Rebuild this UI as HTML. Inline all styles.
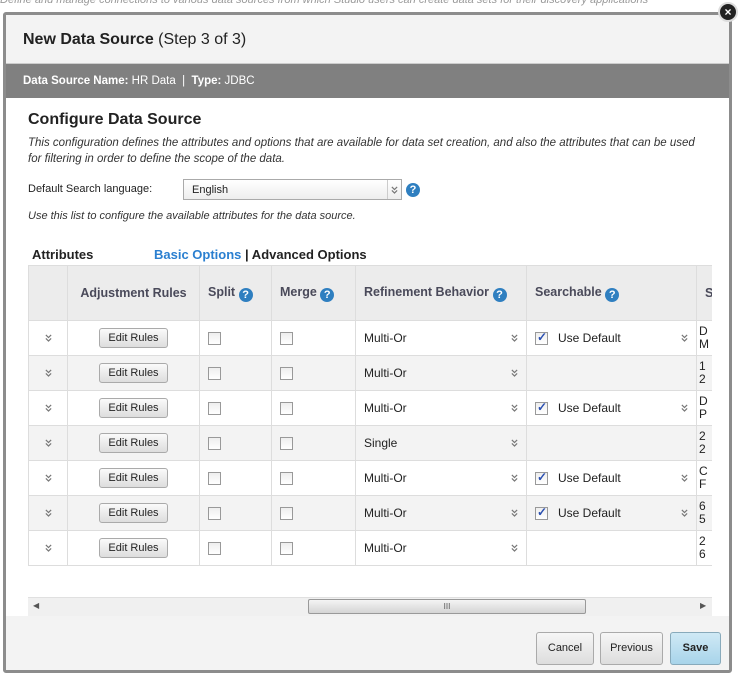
<!DOCTYPE html>
<html><head><meta charset="utf-8"><style>
*{margin:0;padding:0;box-sizing:border-box}
body{width:741px;height:675px;background:#fff;font-family:"Liberation Sans",Arial,sans-serif;position:relative;overflow:hidden;font-size:12px;color:#222}
.a{position:absolute}
.bgtext{left:0;top:-6px;font-size:11px;color:#999;white-space:nowrap;font-style:italic}
.dlg{left:3px;top:12px;width:729px;height:661px;border:3px solid #8c8c8c;border-radius:3px;background:#fff;overflow:hidden}
.hdr{left:0;top:0;width:100%;height:49px;background:#f3f3f3;border-bottom:1px solid #ccc}
.hdr span{position:absolute;left:17px;top:16px;font-size:16px;color:#222}
.bar{left:0;top:49px;width:100%;height:34px;background:#808080;color:#fff;font-size:11.5px;padding:11px 0 0 17px}
h2{position:absolute;left:22px;top:96px;font-size:16px;font-weight:bold;color:#222}
.it{font-style:italic;font-size:11.5px;color:#333;line-height:16px}
.sel{left:177px;top:164px;width:219px;height:21px;border:1px solid #aaa;background:linear-gradient(#fff,#eee);padding:4px 8px;font-size:11px}
.q{display:inline-block;width:14px;height:14px;border-radius:50%;background:#2f7fc0;color:#fff;font-size:11px;font-weight:bold;text-align:center;line-height:14px;vertical-align:-2px}
table{border-collapse:collapse;position:absolute;left:22px;top:250px;table-layout:fixed}
td,th{border:1px solid #ddd;height:35px;font-size:12px;padding:0 8px;white-space:nowrap;overflow:hidden;vertical-align:middle}
th{height:55px;background:#ececec;color:#4a4a5a;font-size:12.5px;text-align:left}
tr.g td{background:#f3f3f3}
.btn{display:inline-block;border:1px solid #aaa;border-radius:3px;background:linear-gradient(#fafafa,#ddd);padding:3px 8px;font-size:11px;color:#222}
.cb{display:inline-block;width:13px;height:13px;border:1px solid #999;background:linear-gradient(#eee,#fff);vertical-align:middle;position:relative}
.cb.c::after{content:"✓";position:absolute;left:1px;top:-3px;color:#2a4fb0;font-size:12px;font-weight:bold}
.dd{display:flex;align-items:center;justify-content:space-between}
.fbtn{top:617px;height:33px;border:1px solid #aaa;border-radius:3px;background:linear-gradient(#f6f6f6,#ddd);font-size:11px;text-align:center;line-height:31px;color:#222}
</style></head><body>
<svg width="0" height="0" style="position:absolute"><defs><symbol id="ch" viewBox="0 0 8 9"><path d="M1 1L4 4L7 1M1 5L4 8L7 5" fill="none" stroke="#777" stroke-width="1.4"/></symbol></defs></svg>
<div class="a bgtext">Define and manage connections to various data sources from which Studio users can create data sets for their discovery applications</div>
<div class="a dlg">
 <div class="a hdr"><span><b>New Data Source</b> (Step 3 of 3)</span></div>
 <div class="a bar"><b>Data Source Name:</b> HR Data &nbsp;|&nbsp; <b>Type:</b> JDBC</div>
 <h2>Configure Data Source</h2>
 <div class="a it" style="left:22px;top:120px;width:678px">This configuration defines the attributes and options that are available for data set creation, and also the attributes that can be used for filtering in order to define the scope of the data.</div>
 <div class="a" style="left:22px;top:168px;font-size:11px">Default Search language:</div>
 <div class="a sel">English<span style="position:absolute;right:0;top:0;width:14px;height:19px;border-left:1px solid #ccc;text-align:center;padding-top:5px"><svg width="7" height="8"><use href="#ch"/></svg></span></div>
 <div class="a" style="left:400px;top:165px"><span class="q">?</span></div>
 <div class="a it" style="left:22px;top:193px;font-size:11px">Use this list to configure the available attributes for the data source.</div>
 <div class="a" style="left:26px;top:232px;font-size:13px;font-weight:bold">Attributes</div>
 <div class="a" style="left:148px;top:232px;font-size:13px;font-weight:bold"><span style="color:#2a7fd0">Basic Options</span> | Advanced Options</div>
 <div class="a" style="left:22px;top:250px;width:684px;height:351px;overflow:hidden">
 <table style="left:0;top:0;width:700px">
  <colgroup><col style="width:39px"><col style="width:132px"><col style="width:72px"><col style="width:84px"><col style="width:171px"><col style="width:170px"><col style="width:32px"></colgroup>
  <tr><th></th><th style="text-align:center">Adjustment Rules</th><th>Split <span class="q">?</span></th><th>Merge <span class="q">?</span></th><th>Refinement Behavior <span class="q">?</span></th><th>Searchable <span class="q">?</span></th><th>S</th></tr>
  <tr><td style="text-align:center"><svg width="7" height="8"><use href="#ch"/></svg></td><td style="text-align:center"><span class="btn">Edit Rules</span></td><td><span class="cb"></span></td><td><span class="cb"></span></td><td><div class="dd">Multi-Or<svg width="7" height="8"><use href="#ch"/></svg></div></td><td><div class="dd"><span><span class="cb c"></span>&nbsp;&nbsp; Use Default</span><svg width="7" height="8"><use href="#ch"/></svg></div></td><td style="line-height:13px;padding:0 2px">D<br>M</td></tr>
  <tr class="g"><td style="text-align:center"><svg width="7" height="8"><use href="#ch"/></svg></td><td style="text-align:center"><span class="btn">Edit Rules</span></td><td><span class="cb"></span></td><td><span class="cb"></span></td><td><div class="dd">Multi-Or<svg width="7" height="8"><use href="#ch"/></svg></div></td><td></td><td style="line-height:13px;padding:0 2px">1<br>2</td></tr>
  <tr><td style="text-align:center"><svg width="7" height="8"><use href="#ch"/></svg></td><td style="text-align:center"><span class="btn">Edit Rules</span></td><td><span class="cb"></span></td><td><span class="cb"></span></td><td><div class="dd">Multi-Or<svg width="7" height="8"><use href="#ch"/></svg></div></td><td><div class="dd"><span><span class="cb c"></span>&nbsp;&nbsp; Use Default</span><svg width="7" height="8"><use href="#ch"/></svg></div></td><td style="line-height:13px;padding:0 2px">D<br>P</td></tr>
  <tr class="g"><td style="text-align:center"><svg width="7" height="8"><use href="#ch"/></svg></td><td style="text-align:center"><span class="btn">Edit Rules</span></td><td><span class="cb"></span></td><td><span class="cb"></span></td><td><div class="dd">Single<svg width="7" height="8"><use href="#ch"/></svg></div></td><td></td><td style="line-height:13px;padding:0 2px">2<br>2</td></tr>
  <tr><td style="text-align:center"><svg width="7" height="8"><use href="#ch"/></svg></td><td style="text-align:center"><span class="btn">Edit Rules</span></td><td><span class="cb"></span></td><td><span class="cb"></span></td><td><div class="dd">Multi-Or<svg width="7" height="8"><use href="#ch"/></svg></div></td><td><div class="dd"><span><span class="cb c"></span>&nbsp;&nbsp; Use Default</span><svg width="7" height="8"><use href="#ch"/></svg></div></td><td style="line-height:13px;padding:0 2px">C<br>F</td></tr>
  <tr class="g"><td style="text-align:center"><svg width="7" height="8"><use href="#ch"/></svg></td><td style="text-align:center"><span class="btn">Edit Rules</span></td><td><span class="cb"></span></td><td><span class="cb"></span></td><td><div class="dd">Multi-Or<svg width="7" height="8"><use href="#ch"/></svg></div></td><td><div class="dd"><span><span class="cb c"></span>&nbsp;&nbsp; Use Default</span><svg width="7" height="8"><use href="#ch"/></svg></div></td><td style="line-height:13px;padding:0 2px">6<br>5</td></tr>
  <tr><td style="text-align:center"><svg width="7" height="8"><use href="#ch"/></svg></td><td style="text-align:center"><span class="btn">Edit Rules</span></td><td><span class="cb"></span></td><td><span class="cb"></span></td><td><div class="dd">Multi-Or<svg width="7" height="8"><use href="#ch"/></svg></div></td><td></td><td style="line-height:13px;padding:0 2px">2<br>6</td></tr>
 </table>
 <div class="a" style="left:0;top:332px;width:684px;height:19px;background:#f0f0f0;border-top:1px solid #e0e0e0"></div>
 <div class="a" style="left:5px;top:336px;font-size:8px;color:#555">◀</div>
 <div class="a" style="left:672px;top:336px;font-size:8px;color:#555">▶</div>
 <div class="a" style="left:280px;top:334px;width:278px;height:15px;border:1px solid #999;border-radius:2px;background:linear-gradient(#f4f4f4,#d4d4d4);text-align:center;font-size:8px;line-height:13px;color:#555">III</div>
 </div>
 <div class="a" style="left:0;top:601px;width:100%;height:60px;background:#f3f3f3"></div>
 <div class="a fbtn" style="left:530px;width:58px">Cancel</div>
 <div class="a fbtn" style="left:594px;width:63px">Previous</div>
 <div class="a fbtn" style="left:664px;width:51px;background:linear-gradient(#cfe9f5,#a8d4ea);border-color:#8ab;font-weight:bold">Save</div>
</div>
<div class="a" style="left:718px;top:2px;width:20px;height:20px;border-radius:50%;background:#222;border:2px solid #ddd;color:#fff;font-weight:bold;font-size:12px;text-align:center;line-height:16px">×</div>
</body></html>
